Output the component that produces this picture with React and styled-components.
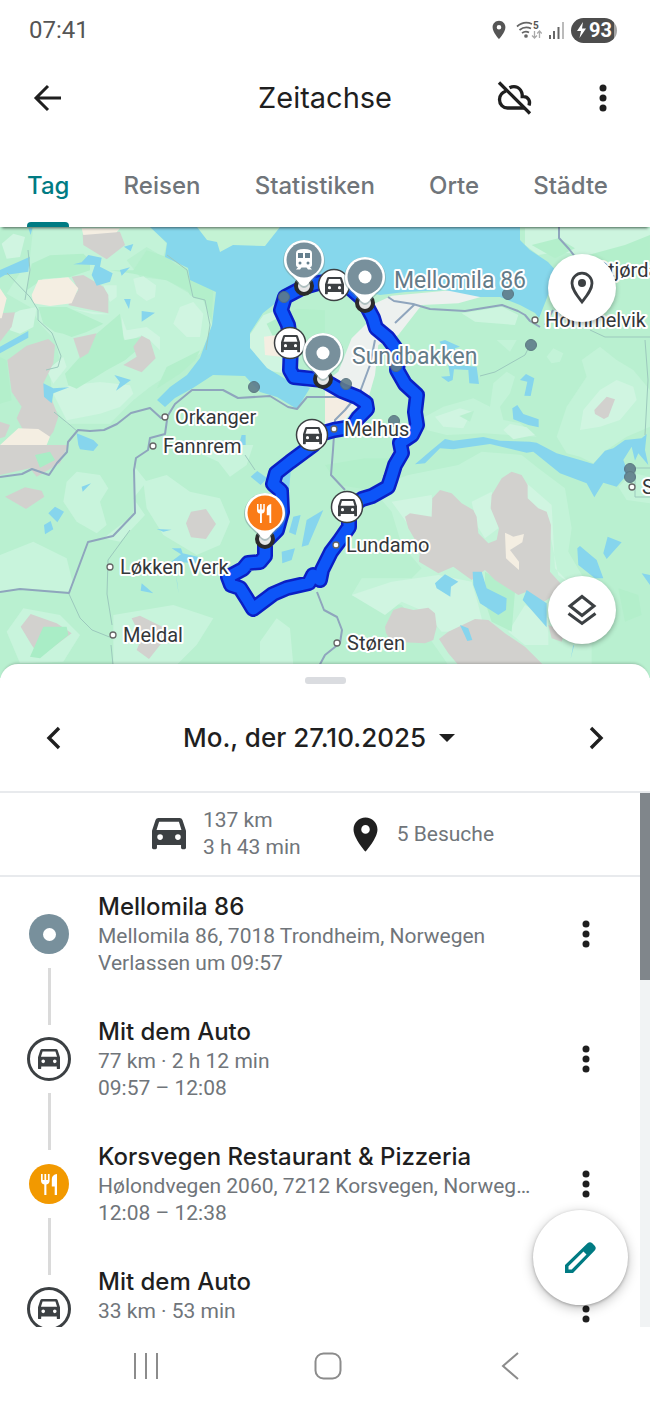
import React, {useState} from "react"
import styled, {createGlobalStyle} from "styled-components"
import {MdPlace} from "react-icons/md"

const GlobalStyle = createGlobalStyle`
  * {
    box-sizing: border-box;
  }
  body {
    margin: 0;
    background: #fff;
    font-family: Roboto, "Liberation Sans", sans-serif;
  }
  button {
    padding: 0;
    border: none;
    background: none;
    color: inherit;
    font: inherit;
    cursor: pointer;
  }
  svg {
    display: block;
  }
`;

const headingFont = `Inter, "Liberation Sans", sans-serif`;

const Screen = styled.div`
  display: flex;
  flex-direction: column;
  height: 100vh;
  overflow: hidden;
  color: #1f1f1f;
`;

/* status bar */

const StatusBar = styled.div`
  display: flex;
  flex: none;
  justify-content: space-between;
  align-items: center;
  height: 60px;
  padding: 0 33px 0 29px;
  color: #555;
`;

const Clock = styled.time`
  font-size: 24px;
  line-height: 28px;
`;

const StatusIcons = styled.div`
  display: flex;
  align-items: center;
  gap: 6px;
`;

const Battery = styled.div`
  display: flex;
  align-items: center;
  justify-content: center;
  gap: 2px;
  width: 46px;
  height: 25px;
  border-radius: 13px;
  background: linear-gradient(90deg, #4d4d4d 93%, #a5a5a5 93%);
  color: #fff;
  font-size: 20px;
  font-weight: 700;
  line-height: 25px;
`;

/* app bar */

const AppBar = styled.header`
  display: grid;
  flex: none;
  grid-template-columns: 1fr auto 1fr;
  align-items: center;
  height: 76px;
  padding: 0 23px;
`;

const Title = styled.h1`
  margin: 0;
  font-family: ${headingFont};
  font-size: 29px;
  font-weight: 400;
  line-height: 36px;
`;

const Actions = styled.div`
  display: flex;
  justify-content: flex-end;
  gap: 40px;
`;

const IconButton = styled.button`
  display: flex;
  align-items: center;
  justify-content: center;
  width: 48px;
  height: 48px;
`;

const Tabs = styled.nav`
  position: relative;
  z-index: 1;
  display: flex;
  flex: none;
  justify-content: space-between;
  padding: 0 42px 0 27px;
  background: #fff;
  box-shadow: 0 3px 3px -2px rgba(0, 0, 0, 0.6);
`;

const Tab = styled.button`
  display: flex;
  flex-direction: column;
  gap: 22px;
  padding-top: 36px;
  font-family: ${headingFont};
  font-size: 24px;
  font-weight: 500;
  line-height: 28px;
  color: ${({$active}) => $active ? "#007b83" : "#70757a"};
  &::after {
    content: "";
    width: 100%;
    height: 5px;
    border-radius: 4px 4px 0 0;
    background: ${({$active}) => $active ? "#007b83" : "transparent"};
  }
`;

/* map */

const MapArea = styled.section`
  position: relative;
  flex: none;
  height: 451px;
  background: #b9f0d0;
`;

const MapSvg = styled.svg`
  width: 100%;
  height: 100%;
`;

const MapControls = styled.div`
  position: absolute;
  top: 27px;
  right: 34px;
  bottom: 34px;
  display: flex;
  flex-direction: column;
  justify-content: space-between;
`;

const RoundButton = styled.button`
  display: flex;
  align-items: center;
  justify-content: center;
  width: ${({$size}) => $size}px;
  height: ${({$size}) => $size}px;
  border-radius: 50%;
  background: #fff;
  box-shadow: 0 2px 5px rgba(0, 0, 0, 0.3);
`;

const EditButton = styled(RoundButton)`
  position: absolute;
  right: 22px;
  bottom: 22px;
  box-shadow: 0 3px 12px rgba(0, 0, 0, 0.25), 0 1px 3px rgba(0, 0, 0, 0.25);
`;

const TownLabel = styled.text`
  font-size: 20px;
  fill: #34373a;
  stroke: #fff;
  stroke-width: 4px;
  stroke-linejoin: round;
  paint-order: stroke;
`;

const VisitLabel = styled(TownLabel)`
  font-size: 23px;
  fill: #647b88;
`;

/* bottom sheet */

const Sheet = styled.main`
  position: relative;
  z-index: 1;
  display: flex;
  flex: 1;
  flex-direction: column;
  min-height: 0;
  margin-top: -14px;
  border-radius: 18px 18px 0 0;
  background: #fff;
  box-shadow: 0 -3px 3px -2px rgba(0, 0, 0, 0.2);
`;

const Handle = styled.div`
  flex: none;
  align-self: center;
  width: 41px;
  height: 7px;
  margin-top: 13px;
  border-radius: 3px;
  background: #dadce0;
`;

const DateBar = styled.div`
  display: flex;
  flex: none;
  justify-content: space-between;
  align-items: center;
  height: 109px;
  padding: 0 30px;
  border-bottom: 2px solid #e8eaed;
`;

const DateButton = styled.button`
  display: flex;
  align-items: center;
  gap: 13px;
  padding-right: 12px;
  font-family: ${headingFont};
  font-size: 26px;
  font-weight: 500;
  line-height: 32px;
`;

const ScrollRow = styled.div`
  display: flex;
  flex: 1;
  min-height: 0;
`;

const ScrollContent = styled.div`
  flex: 1;
  min-width: 0;
  overflow-y: auto;
  scrollbar-width: none;
`;

const ScrollTrack = styled.div`
  flex: none;
  width: 10px;
  background: #f1f3f4;
`;

const ScrollThumb = styled.div`
  height: 35%;
  background: #80868b;
`;

const Summary = styled.div`
  display: flex;
  justify-content: center;
  align-items: center;
  gap: 44px;
  height: 84px;
  padding-left: 6px;
  border-bottom: 2px solid #e8eaed;
`;

const SummaryPart = styled.div`
  display: flex;
  align-items: center;
  gap: ${({$gap}) => $gap}px;
  font-size: 21px;
  line-height: 27px;
  color: #70757a;
  svg {
    flex: none;
    color: ${({$iconColor}) => $iconColor};
  }
`;

const List = styled.ol`
  margin: 0;
  padding: 0;
  list-style: none;
`;

const Item = styled.li`
  display: flex;
  height: 125px;
`;

const Rail = styled.div`
  display: flex;
  flex: none;
  flex-direction: column;
  align-items: center;
  width: 98px;
  gap: 12px;
`;

const Connector = styled.div`
  flex: ${({$top}) => $top ? "0 0 23px" : 1};
  width: 3px;
  background: ${({$hidden}) => $hidden ? "transparent" : "#dadada"};
`;

const badgeColors = {
  place: "#78909c",
  food: "#f29900"
};

const Badge = styled.div`
  display: flex;
  flex: none;
  align-items: center;
  justify-content: center;
  width: ${({$kind}) => $kind === "car" ? 44 : 40}px;
  height: ${({$kind}) => $kind === "car" ? 44 : 40}px;
  margin: ${({$kind}) => $kind === "car" ? 0 : "2px 0"};
  border: ${({$kind}) => $kind === "car" ? "3px solid #3c4043" : "none"};
  border-radius: 50%;
  background: ${({$kind}) => badgeColors[$kind] || "#fff"};
  color: ${({$kind}) => $kind === "car" ? "#3c4043" : "#fff"};
`;

const Hole = styled.span`
  width: 13px;
  height: 13px;
  border-radius: 50%;
  background: #fff;
`;

const ItemText = styled.div`
  flex: 1;
  min-width: 0;
  padding-top: 13px;
`;

const ItemTitle = styled.h2`
  margin: 0;
  font-family: ${headingFont};
  font-size: 24px;
  font-weight: 500;
  line-height: 33px;
`;

const ItemLine = styled.p`
  margin: 0;
  overflow: hidden;
  font-size: 21px;
  line-height: 27px;
  color: #70757a;
  text-overflow: ellipsis;
  white-space: nowrap;
`;

const ItemMenu = styled(IconButton)`
  flex: none;
  width: 60px;
  margin: 33px 24px 0 20px;
`;

/* system navigation */

const SystemNav = styled.nav`
  display: flex;
  flex: none;
  height: 81px;
  padding: 0 49px 4px 55px;
`;

const SystemButton = styled.button`
  display: flex;
  flex: 1;
  align-items: center;
  justify-content: center;
`;

const Dots = () => (
  <svg width="8" height="28" viewBox="0 0 8 28" fill="currentColor">
    <circle cx="4" cy="4" r="3.5"/>
    <circle cx="4" cy="14" r="3.5"/>
    <circle cx="4" cy="24" r="3.5"/>
  </svg>
);

const Chevron = ({d}) => (
  <svg width="16" height="24" viewBox="0 0 16 24" fill="none" stroke="currentColor" strokeWidth="3.4">
    <path d={d}/>
  </svg>
);

const WifiIcon = () => (
  <svg width="26" height="20" viewBox="0 0 26 20" fill="none" stroke="#666" strokeWidth="1.7">
    <path d="M1 6.5Q8 .5 16 4M3.5 10Q9 5.5 15 8.5M6 13Q9.5 10.5 13 12.5"/>
    <circle cx="10" cy="16" r="1" fill="#666"/>
    <path d="M18.5 11v7m-2.5-2.5 2.5 2.5 2.5-2.5M23.5 18v-7m-2.3 2.5 2.3-2.5 2.3 2.5" stroke="#aaa" strokeWidth="1.3"/>
    <text x="17" y="9" fontSize="10" fontWeight="700" fill="#555" stroke="none">5</text>
  </svg>
);

const SignalIcon = () => (
  <svg width="17" height="18" viewBox="0 0 17 18">
    <path d="M1 14h2v4H1zM5 10h2v8H5zM9.5 6h2v12h-2z" fill="#666"/>
    <path d="M14 1h2v17h-2z" fill="#bbb"/>
  </svg>
);

const CloudOffIcon = () => (
  <svg width="36" height="36" viewBox="0 0 36 36" fill="none" stroke="currentColor" strokeWidth="3.3">
    <path d="M2 2.5 33 33.5"/>
    <path d="M9 11C5 12.5 2.5 15.5 2.5 19.5c0 5 3.5 8.5 8 8.5H27"/>
    <path d="M12.5 7.800c5.500-3 11.500-.3 12.700 6.700v2.200h1.300c4.500 0 7.300 4.300 5.500 8.800"/>
  </svg>
);

const PinOutlineIcon = () => (
  <svg width="26" height="34" viewBox="0 0 26 34" fill="none" stroke="#3c4043" strokeWidth="2.8">
    <path d="M13 31C8 24.5 3 18.5 3 12.2a10 10 0 0 1 20 0C23 18.5 18 24.5 13 31z"/>
    <circle cx="13" cy="12" r="4" fill="#3c4043" stroke="none"/>
  </svg>
);

const LayersIcon = () => (
  <svg width="32" height="32" viewBox="0 0 32 32" fill="none" stroke="#3c4043" strokeWidth="3">
    <path d="M16 2.5 28 12 16 21.5 4 12z"/>
    <path d="M2.5 19.5 16 29.5l13.5-10"/>
  </svg>
);

const PencilIcon = () => (
  <svg width="31" height="31" viewBox="0 0 31 31" fill="#007b83" fillRule="evenodd">
    <path d="M0 23 22.5 1.3Q25-.8 27.3 1.3L29.7 3.7Q31.8 6 29.7 8.5L8 31H0zM3.5 24.3v3.2h3.2L21.500 12.500 18.500 9.500z"/>
  </svg>
);

const CarIcon = ({width, ...rest}) => (
  <svg width={width} height={width * 22 / 24} viewBox="0 0 24 22" fill="currentColor" fillRule="evenodd" {...rest}>
    <path d="M4.5 0h15q1.5 0 2 1.5L24 9v12q0 1-1 1h-1.5q-1 0-1-1v-2h-17v2q0 1-1 1H1q-1 0-1-1V9L2.5 1.5Q3 0 4.5 0zM5 2.6 3.2 8.5h17.6L19 2.6zM5.7 11.5a2 2 0 1 0 0 4 2 2 0 0 0 0-4zM18.3 11.5a2 2 0 1 0 0 4 2 2 0 0 0 0-4z"/>
  </svg>
);

const FoodIcon = ({height, ...rest}) => (
  <svg width={height * 16 / 21} height={height} viewBox="0 0 16 21" fill="currentColor" {...rest}>
    <path d="M0 0h1.7v6h1.7V0h1.8v6h1.7V0h1.7v6.5q0 3.5-3.2 4V21H3.3V10.5Q0 10 0 6.5z"/>
    <path d="M16 0v21h-2.3v-8.5h-2.9V5Q11 .8 16 0z"/>
  </svg>
);

const TrainIcon = () => (
  <g fill="#fff">
    <path d="M-8-7Q-8-11 0-11T8-7V5Q8 7 6 7.2L8 9.5H4L2.5 7.5h-5L-4 9.5H-8L-6 7.2Q-8 7-8 5z"/>
    <path d="M-6-7H-1v5H-6zM1-7H6v5H1z" fill="#66808e"/>
    <circle cx="-4" cy="3" r="1.5" fill="#66808e"/>
    <circle cx="4" cy="3" r="1.5" fill="#66808e"/>
  </g>
);

// a part of the map drawn at three times its size
const Tile = ({x, y, children}) => (
  <g transform={`translate(${x} ${y}) scale(0.3333)`}>{children}</g>
);

const Terrain = () => (
  <g>
    <path d="M0 227h650v455H0z" fill="#b9f0d0"/>
    <Tile x={0} y={227}>
      <path d="M100 0H455L500 50 490 90 440 60 380 100 420 150 500 160 570 200 585 215 610 220 640 300 600 380 450 480 400 520 330 590H200L160 540 150 440 180 400 165 340 120 290 90 240 20 200 90 90z" fill="#c3f3d8"/>
      <g fill="#d0f5e1">
        <path d="M400 155 430 148 468 175 465 210 440 222 410 200z"/>
        <path d="M365 270 380 310 440 300 480 330 480 370 455 345 425 325 380 345 370 330z"/>
        <path d="M310 175 350 175 350 210 330 225z"/>
        <path d="M520 290 540 240 580 225 610 260 600 330 560 330z"/>
        <path d="M20 270 60 250 110 240 100 300 60 320 30 310z"/>
        <path d="M160 500 210 475 300 465 390 475 400 500 360 540 300 560 200 580z"/>
        <path d="M5 50 40 20 75 30 60 90 20 95z"/>
        <path d="M215 245 330 262 280 262zM140 430 190 390 200 420 160 470z"/>
        <path d="M600 5H740L750 60 700 68 665 78 650 50 610 40z"/>
        <path d="M745 330 790 265 830 250 860 300 840 380 860 440 800 430 750 370z"/>
      </g>
      <g fill="#b3efcb">
        <path d="M95 110 150 85 250 80 270 100 270 130 210 150 130 155 80 190z"/>
        <path d="M115 240 200 240 310 290 260 315 215 330 190 320 165 315 130 290z"/>
        <path d="M195 440 240 390 290 320 360 260 372 340 425 330 410 370 375 400 320 430 230 485 205 475z"/>
        <path d="M330 130 400 130 440 70 500 90 560 140 580 200 500 160 400 140z"/>
        <path d="M500 420 600 370 585 400 540 440 470 485z"/>
        <path d="M0 390 20 400 35 520 0 530zM480 100 565 125 570 150 640 190 635 280 610 220 570 205 540 150z"/>
        <path d="M800 290 890 245 975 250V400L900 380 830 350z"/>
      </g>
    </Tile>
    <Tile x={0} y={225}>
      <g fill="#d2d1ce">
        <path d="M248 28 300 20 360 20 375 60 320 103 250 60z"/>
        <path d="M215 155 250 150 310 185 325 210 325 265 250 250 205 240 235 195z"/>
        <path d="M0 265 45 262 35 305 0 350z"/>
        <path d="M22 405 80 362 145 342 165 360 160 415 130 475 150 510 175 575 160 620 130 660 75 625 50 580 65 545 35 500z"/>
        <path d="M220 340 290 325 265 385 240 400z"/>
        <path d="M425 332 450 345 467 400 425 442 370 420 410 395 400 365z"/>
        <path d="M0 590 30 600 15 635 0 640z"/>
      </g>
      <g fill="#f4eee2">
        <path d="M95 210 115 165 205 157 235 190 215 235 150 243 100 235z"/>
        <path d="M0 190 20 220 5 280H0zM0 660 55 610 115 612 150 635 140 660z"/>
        <path d="M245 10H360L350 22 250 30zM792 335 832 330 842 395 795 390z"/>
      </g>
      <g fill="#86d5ed">
        <path d="M0 135 90 95 85 140 15 150 0 158z"/>
        <path d="M0 365 85 318 85 338 0 385z"/>
        <path d="M220 118 245 112 265 90 305 98 300 125 338 145 330 170 290 182 275 150 285 120z"/>
        <path d="M360 135l30-8-25 25zM372 65l28-8-8 22zM372 222l20 0-5 30zM425 258l40 5-40 27z"/>
        <path d="M130 475 160 490 208 487 160 505 155 535 132 515zM343 450 393 465 348 497 360 472z"/>
        <path d="M85 10h12l-5 20zM230 625l50 20 15 15h-60zM725 630l12 0v30h-20z"/>
      </g>
    </Tile>
    <Tile x={325} y={225}>
      <g fill="#cdf5df">
        <path d="M600 10H975V130L900 150 840 110 780 90 700 80 640 90 600 60z"/>
        <path d="M410 265 530 245 580 270 570 300 450 290z"/>
      </g>
      <path d="M790 90 900 60 975 30V110L880 140zM620 60l80-20 50 30-60 30z" fill="#b3efcb"/>
      <path d="M140 240 200 212 330 200 440 190 470 215 400 235 290 240 220 330 160 360 150 450 130 520 80 560 50 600 0 640V470L40 440 80 340 130 290z" fill="#edf1ef"/>
      <path d="M0 510H80L60 580 0 590z" fill="#f4ede2"/>
    </Tile>
    <Tile x={0} y={445}>
      <g fill="#c8f4dc">
        <path d="M200 110 230 80 300 90 325 130 300 170 320 240 290 265 230 230 190 170z"/>
        <path d="M430 110 500 90 570 140 660 160 690 230 660 300 590 330 490 270 440 190z"/>
        <path d="M0 330 100 290 200 340 220 420 205 440 60 430 0 440zM340 510 520 480 640 520 590 600 530 660H340z"/>
        <path d="M20 560 70 490 180 510 240 570 190 650 60 655z"/>
        <path d="M600 0H760L740 60 690 95 655 50 610 30zM780 590 830 520 870 550 880 660H780zM400 60 440 110 400 160 435 210 360 290 310 280 400 210z"/>
      </g>
      <g fill="#d2d1ce">
        <path d="M0 0H205L180 55 110 95 90 70 0 90z"/>
        <path d="M15 155 75 127 125 137 133 155 78 192zM558 235l15-35 45-8 30 45-30 45-45-5z"/>
        <path d="M62 545 92 507 170 535 215 565 120 635 95 600zM395 520 420 512 490 547 492 585 447 642 410 615 425 580z"/>
      </g>
      <path d="M105 30 150 20 165 45 120 68zM90 635 130 545 200 545 205 570 180 590 120 640z" fill="#a9edc6"/>
      <g fill="#86d5ed">
        <path d="M145 205l20-20 27 15-20 32zM132 240l20-12 8 25-25 15zM245 125l28-10-25 25z"/>
        <path d="M752 95l20-17 30 22-20 20zM470 252l45 2-25 6zM515 310l28 0 5 15 45 10 5 20-85-5 30-22z"/>
        <path d="M425 415l35 30-38-8zM880 215l22-5-15 60-20-8zM920 225l50-30-45 105-20 5zM845 320l40-10-10 35-28 10z"/>
        <path d="M850 60l22 20-8 90-15-40zM235 0h60l-15 18-40-5zM528 385l8 60-5-30z"/>
      </g>
    </Tile>
    <Tile x={325} y={445}>
      <path d="M140 130 250 90 400 60 470 20 590 30 640 70 720 130 740 250 730 320 800 440 800 660H370L300 560 230 480 80 450 110 400 260 400 290 370 230 300 200 200z" fill="#c3f3d8"/>
      <path d="M200 170 320 150 330 230 250 240zM440 170 500 140 520 250 480 280 455 240zM80 450 200 410 340 390 440 410 460 480 480 560 350 560 300 500 230 470 180 510zM600 110 680 180 690 370 740 420 700 390 670 240 610 170zM550 560 600 480 670 520 670 600 600 600z" fill="#d0f5e1"/>
      <path d="M0 60 120 40H240L170 140 40 120zM480 380 530 410 570 440 560 560 500 530 480 470zM880 430 940 450 950 510 900 530z" fill="#b3efcb"/>
      <g fill="#d2d1ce">
        <path d="M240 215 255 205 320 215 322 160 345 135 380 145 410 175 445 195 455 215 460 265 490 295 515 285 522 250 497 190 500 150 530 100 560 80 590 90 608 120 608 160 640 190 665 200 678 240 675 380 720 430 650 475 605 440 580 450 510 405 480 375 440 405 385 365 340 385 282 350 285 310 250 250z"/>
        <path d="M180 545 205 495 230 487 265 495 310 488 330 505 335 545 325 585 300 595 200 590 183 565z"/>
        <path d="M342 582 370 560 450 522 490 525 540 565 600 605 655 660H400L370 625z"/>
        <path d="M670 540 720 560 710 590 680 580z"/>
      </g>
      <path d="M540 263 565 275 597 267 592 292 555 315 582 350V375L543 340z" fill="#f4eee2"/>
      <g fill="#86d5ed">
        <path d="M330 415 360 388 400 410 378 425 376 455 335 430zM443 380 470 380 485 430 545 460 543 495 520 510 465 475 445 420z"/>
        <path d="M605 435 665 475V547L593 465zM757 310 765 303 815 345 835 400 810 400 760 360zM848 275 890 292 845 342 835 325z"/>
        <path d="M405 540l25 10 12 35-15 3zM745 600l2 2-10 40zM950 385l25 5v30z"/>
      </g>
    </Tile>
    <Tile x={400} y={340}>
      <g fill="#c3f3d8">
        <path d="M75 230 130 200 220 175 270 200 280 130 320 95 345 110 330 160 300 200 310 240 360 250 410 290 250 280 140 285 80 270z"/>
        <path d="M470 290 500 200 560 110 545 60 600 20 650 60 700 90 750 150V260L680 290 620 330 580 370 540 350 500 340z"/>
        <path d="M440 50 460 25 490 40 480 65 455 70zM290 0H350L330 35z"/>
        <path d="M655 440 700 400 750 410V490L680 480z"/>
      </g>
      <g fill="#d0f5e1">
        <path d="M105 230 180 205 215 215 190 265 130 260zM550 210 600 150 650 120 700 140 710 180 660 240 600 260 540 270z"/>
        <path d="M310 270 330 252 380 262 405 285 340 298z"/>
      </g>
      <path d="M178 228 222 212 210 245z" fill="#b9f0d0"/>
      <path d="M583 210 620 170 645 178 625 230 612 237 585 222z" fill="#d2d1ce"/>
      <g fill="#86d5ed">
        <path d="M118 5 135 0 180 20 165 25 165 75 230 80 237 132 208 130 205 90 162 88 158 120 145 126 123 110 150 108 145 75 155 50z"/>
        <path d="M360 120 378 102 403 115 392 168 373 167 382 125zM337 205 352 195 370 222 416 238V262L385 255 340 238z"/>
        <path d="M45 373 95 330 135 297 160 302 250 291 300 302 390 305 410 308 470 340 540 360 580 372 615 332 640 325 675 300 725 295 740 282 735 330 745 375 715 340 705 362 695 320 670 360 685 400 650 440 610 428 583 472 560 430 480 400 400 335 380 338 345 330 270 312 160 328 120 325 75 370z"/>
      </g>
    </Tile>
    <path
      d="M150 227 167 243 165 257 188 268 190 280 216 292 212 325 200 358 187 375 170 387 157 400 165 407 175 398 193 388 213 375 245 376 260 392 277 397 297 409 310 388 287 380 267 368 250 348V333L263 313 277 302 286 292 304 280 345 287 380 295 405 292 445 290 480 297 500 297 520 305 535 313 539 318 545 303 548 295 560 275 548 262 530 250 520 240V227z"
      fill="#86d7ec"
    />
    <path d="M197 227 207 240 217 242 220 252 233 245 265 246 280 227z" fill="#c4f3d4"/>
  </g>
);

const minorRoads = [
  "M7 273 30 297 38 310V320L52 333 61 356 58 367 46 370M25 300 30 270 28 250",
  "M167 255 187 270 193 297 205 300 210 325 206 350",
  "M54 412 70 425 78 432M69 594 80 618 92 630 112 638M111 645 114 675M130 530 108 560 107 594 112 625",
  "M325 341 315 350M480 376 495 372 525 355 530 345M590 330 605 337H650M650 468H635V497H650",
  "M245 455 255 470M645 340 648 380 645 435"
];

const majorRoads = [
  "M0 477 22 474 32 469 49 475 57 463 67 452 68 442 78 430 90 431 104 430 117 424 131 413 150 408 161 418 167 417 175 404 192 390H223L238 398 270 396 288 407 297 409 307 397H345",
  "M167 420 165 434 150 438 148 450 136 458 134 470 135 513 113 536 88 542 69 593 20 589 0 592",
  "M388 297 394 301 413 304 430 309 465 311 502 305 518 311 525 315 530 321 540 327M415 304 395 323M545 325 553 310",
  "M559 227V238L569 249 576 258M375 340 370 365 360 392 345 410 335 420 333 450 331 475 345 490",
  "M317 592 324 610 337 617 342 630 340 643 325 655 318 668"
];

const routes = [
  "M304 287 318 283 334 281 350 288 365 301",
  "M304 287 285 297 281 310 288 325 291 345 290 370 294 377 323 380 342 391 357 397 366 403 367 409 358 418 352 427 334 430 313 436V445L290 462 276 473 273 484 281 491 282 512 277 530 265 542V556L260 562 248 563 243 569 228 577 231 585 240 588 247 599 253 609 273 594 287 588 309 583 313 575 320 580 322 570 331 552 340 540 349 527V508L362 499 372 496 388 487 391 478 395 465 402 453 400 443 412 435 417 425 415 412 417 395 405 384 397 370 399 353 388 338 376 328 373 318 365 303"
];

const smallDots = [
  [254, 387], [284, 297], [508, 294], [531, 345], [394, 421], [346, 384], [396, 366], [630, 469], [630, 477]
];

const towns = [
  {name: "Orkanger", x: 165, y: 417},
  {name: "Fannrem", x: 153, y: 446},
  {name: "Løkken Verk", x: 110, y: 567},
  {name: "Meldal", x: 113, y: 635},
  {name: "Støren", x: 337, y: 643},
  {name: "Hommelvik", x: 535, y: 320},
  {name: "Lundamo", x: 336, y: 545},
  {name: "Melhus", x: 334, y: 429},
  {name: "Selbu", x: 632, y: 487},
  {name: "Stjørdal", x: 586, y: 270}
];

const cars = [[334, 285], [290, 343], [312, 435], [347, 507]];

const MapPin = ({x, y, color, children}) => (
  <g transform={`translate(${x} ${y})`}>
    <circle cy="26" r="8" fill="#e6e6e6" stroke="#2b2b2b" strokeWidth="4"/>
    <path d="M-21 0a21 21 0 1 1 42 0C21 12 11 15 4 25q-4 4-8 0C-11 15-21 12-21 0z" fill="#799" opacity="0.5" transform="translate(0 1)"/>
    <path d="M-20 0a20 20 0 1 1 40 0C20 12 10 15 4 24q-4 4-8 0C-10 15-20 12-20 0z" fill="#fff"/>
    <circle r="17.5" fill={color}/>
    {children}
  </g>
);

const TimelineMap = () => (
  <MapArea>
    <MapSvg viewBox="0 227 650 451" preserveAspectRatio="xMidYMid slice" role="img" aria-label="Karte">
      <Terrain/>
      <g fill="none" stroke="#9cc9bd" strokeWidth="1">
        {minorRoads.map(d => <path d={d} key={d}/>)}
      </g>
      <g fill="none" stroke="#8fa5bd" strokeWidth="2" strokeLinejoin="round">
        {majorRoads.map(d => <path d={d} key={d}/>)}
      </g>
      <g fill="none" strokeLinejoin="round">
        {routes.map(d => <path d={d} stroke="#0a1fc4" strokeWidth="16" key={d}/>)}
        {routes.map(d => <path d={d} stroke="#0d55f8" strokeWidth="11" key={d}/>)}
      </g>
      <g fill="#607d8b" stroke="#546e7a" opacity="0.9">
        {smallDots.map(([x, y]) => <circle cx={x} cy={y} r="5.5" key={`${x}-${y}`}/>)}
      </g>
      {towns.map(({name, x, y}) => (
        <g key={name}>
          <circle cx={x} cy={y} r="3" fill="#fff" stroke="#666" strokeWidth="1.3"/>
          <TownLabel x={x + 10} y={y + 7}>{name}</TownLabel>
        </g>
      ))}
      <VisitLabel x="394" y="288">Mellomila 86</VisitLabel>
      <VisitLabel x="352" y="364">Sundbakken</VisitLabel>
      <MapPin x={304} y={260} color="#78909c"><TrainIcon/></MapPin>
      {cars.map(([x, y]) => (
        <g color="#3c4043" key={x}>
          <circle cx={x} cy={y} r="15.5" fill="#fff" stroke="currentColor" strokeWidth="1.5"/>
          <CarIcon x={x - 9} y={y - 8} width={19}/>
        </g>
      ))}
      <MapPin x={365} y={277} color="#78909c"><circle r="6.5" fill="#fff"/></MapPin>
      <MapPin x={323} y={353} color="#78909c"><circle r="6.5" fill="#fff"/></MapPin>
      <MapPin x={265} y={513} color="#fa7b17">
        <FoodIcon x="-8" y="-9" height={19} color="#fff"/>
      </MapPin>
    </MapSvg>
    <MapControls>
      <RoundButton $size={68} aria-label="Orte anzeigen"><PinOutlineIcon/></RoundButton>
      <RoundButton $size={68} aria-label="Ebenen"><LayersIcon/></RoundButton>
    </MapControls>
  </MapArea>
);

const badgeIcons = {
  place: <Hole/>,
  car: <CarIcon width={22}/>,
  food: <FoodIcon height={21}/>
};

const TimelineItem = ({kind, title, lines, first}) => (
  <Item>
    <Rail>
      <Connector $top $hidden={first}/>
      <Badge $kind={kind}>{badgeIcons[kind]}</Badge>
      <Connector/>
    </Rail>
    <ItemText>
      <ItemTitle>{title}</ItemTitle>
      {lines.map(line => <ItemLine key={line}>{line}</ItemLine>)}
    </ItemText>
    <ItemMenu aria-label="Mehr"><Dots/></ItemMenu>
  </Item>
);

const tabs = ["Tag", "Reisen", "Statistiken", "Orte", "Städte"];

const entries = [
  {kind: "place", title: "Mellomila 86", lines: ["Mellomila 86, 7018 Trondheim, Norwegen", "Verlassen um 09:57"]},
  {kind: "car", title: "Mit dem Auto", lines: ["77 km · 2 h 12 min", "09:57 – 12:08"]},
  {kind: "food", title: "Korsvegen Restaurant & Pizzeria", lines: ["Hølondvegen 2060, 7212 Korsvegen, Norwegen", "12:08 – 12:38"]},
  {kind: "car", title: "Mit dem Auto", lines: ["33 km · 53 min"]}
];

const App = () => {
  const [active, setActive] = useState(0);
  return (
    <Screen>
      <GlobalStyle/>
      <StatusBar>
        <Clock>07:41</Clock>
        <StatusIcons>
          <MdPlace size={22}/>
          <WifiIcon/>
          <SignalIcon/>
          <Battery>
            <svg width="11" height="16" viewBox="0 0 11 16" fill="#fff"><path d="M7 0 1 9h4l-1.5 7L10 6.5H6z"/></svg>
            93
          </Battery>
        </StatusIcons>
      </StatusBar>
      <AppBar>
        <IconButton aria-label="Zurück">
          <svg width="28" height="28" viewBox="0 0 28 28" fill="none" stroke="currentColor" strokeWidth="3">
            <path d="M15 2 3 14l12 12M3 14h25"/>
          </svg>
        </IconButton>
        <Title>Zeitachse</Title>
        <Actions>
          <IconButton aria-label="Sicherung aus"><CloudOffIcon/></IconButton>
          <IconButton aria-label="Menü"><Dots/></IconButton>
        </Actions>
      </AppBar>
      <Tabs>
        {tabs.map((tab, index) => (
          <Tab $active={index === active} onClick={() => setActive(index)} key={tab}>{tab}</Tab>
        ))}
      </Tabs>
      <TimelineMap/>
      <Sheet>
        <Handle/>
        <DateBar>
          <IconButton aria-label="Vorheriger Tag"><Chevron d="M13 2 3 12l10 10"/></IconButton>
          <DateButton>
            Mo., der 27.10.2025
            <svg width="16" height="8" viewBox="0 0 16 8" fill="currentColor"><path d="M0 0h16L8 8z"/></svg>
          </DateButton>
          <IconButton aria-label="Nächster Tag"><Chevron d="M3 2l10 10L3 22"/></IconButton>
        </DateBar>
        <ScrollRow>
          <ScrollContent>
            <Summary>
              <SummaryPart $iconColor="#3c4043" $gap={17}>
                <CarIcon width={34}/>
                <span>137 km<br/>3 h 43 min</span>
              </SummaryPart>
              <SummaryPart $iconColor="#1f1f1f" $gap={11}>
                <MdPlace size={41}/>
                <span>5 Besuche</span>
              </SummaryPart>
            </Summary>
            <List>
              {entries.map((entry, i) => <TimelineItem {...entry} first={i === 0} key={i}/>)}
            </List>
          </ScrollContent>
          <ScrollTrack><ScrollThumb/></ScrollTrack>
        </ScrollRow>
        <EditButton $size={95} aria-label="Bearbeiten"><PencilIcon/></EditButton>
      </Sheet>
      <SystemNav>
        <SystemButton aria-label="Letzte Apps">
          <svg width="26" height="26" viewBox="0 0 26 26" stroke="#8c8c8c" strokeWidth="2"><path d="M2 0v26M13 0v26M24 0v26"/></svg>
        </SystemButton>
        <SystemButton aria-label="Startbildschirm">
          <svg width="28" height="28" viewBox="0 0 28 28" fill="none" stroke="#8c8c8c" strokeWidth="2"><rect x="1.5" y="1.5" width="25" height="25" rx="8"/></svg>
        </SystemButton>
        <SystemButton aria-label="Zurück zur vorherigen App">
          <svg width="18" height="28" viewBox="0 0 18 28" fill="none" stroke="#8c8c8c" strokeWidth="2"><path d="M17 1 2 14l15 13"/></svg>
        </SystemButton>
      </SystemNav>
    </Screen>
  )
};

export default App
